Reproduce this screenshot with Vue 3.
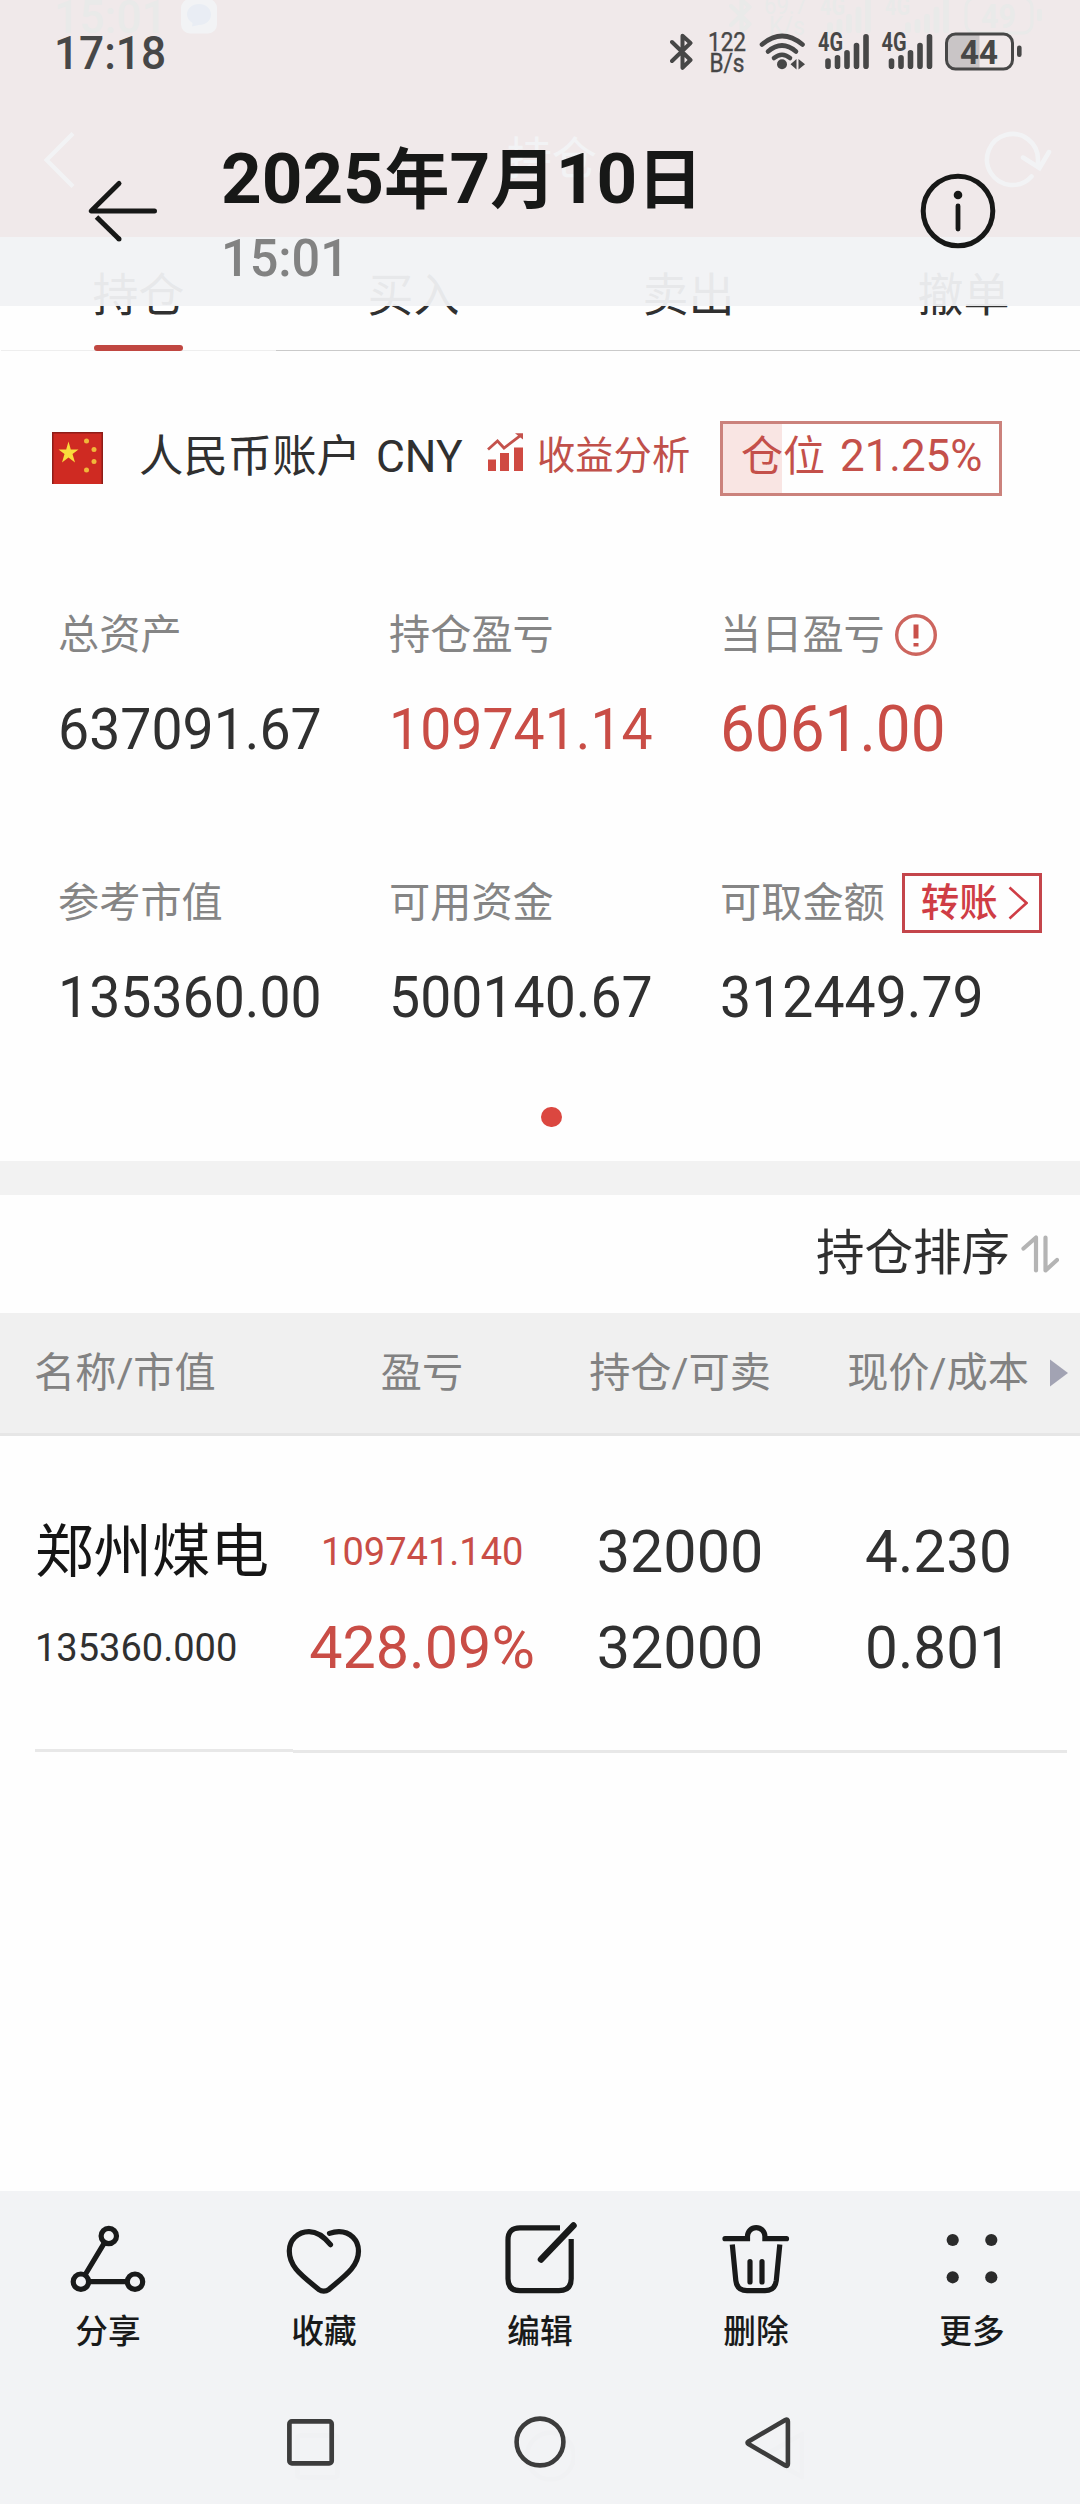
<script setup>
import { ref } from 'vue'

const tabs = ref(['持仓', '买入', '卖出', '撤单'])
const activeTab = ref(0)

const position = ref(21.25)

const assets = ref([
  { label: '总资产', value: '637091.67' },
  { label: '持仓盈亏', value: '109741.14', red: true },
  { label: '当日盈亏', value: '6061.00', red: true, big: true, alert: true },
  { label: '参考市值', value: '135360.00' },
  { label: '可用资金', value: '500140.67' },
  { label: '可取金额', value: '312449.79', transfer: true },
])

const columns = ['名称/市值', '盈亏', '持仓/可卖', '现价/成本']

const holdings = ref([
  {
    name: '郑州煤电',
    marketValue: '135360.000',
    profit: '109741.140',
    profitRate: '428.09%',
    amount: '32000',
    available: '32000',
    price: '4.230',
    cost: '0.801',
  },
])

const actions = [
  { key: 'share', text: '分享' },
  { key: 'favorite', text: '收藏' },
  { key: 'edit', text: '编辑' },
  { key: 'delete', text: '删除' },
  { key: 'more', text: '更多' },
]
</script>

<template>
  <div class="screen">
    <!-- shared status bar glyphs -->
    <svg class="sprite" width="0" height="0">
      <symbol id="bt" viewBox="0 0 24 40" overflow="visible">
        <path d="M2 10 L20.500 28 L12.500 35.800 V3.800 L20.500 11 L2 29" fill="none" stroke="currentColor" stroke-width="4" stroke-linejoin="round" stroke-linecap="round" />
      </symbol>
      <symbol id="bars" viewBox="0 0 52 40" overflow="visible">
        <path d="M10 29.100 V34.300 M19.500 25.800 V34.300 M29 20.800 V34.300 M38.500 13.500 V34.300 M48 4.800 V34.300" fill="none" stroke="currentColor" stroke-width="5.600" stroke-linecap="round" />
      </symbol>
    </svg>

    <header class="app-bar">
      <div class="old-status">
        <span class="old-time">15:01</span>
        <svg class="bubble" width="36" height="36" viewBox="0 0 36 36">
          <rect width="36" height="34.500" rx="9" fill="#fff" />
          <path d="M18 5 C25 5 30 9.500 30 15.500 C30 21.500 25 26 18 26 L11 27.500 L11.500 24 C8 22 6 19 6 15.500 C6 9.500 11 5 18 5Z" fill="#4d8fe0" />
        </svg>
        <svg class="old-icons" width="320" height="40" viewBox="0 0 320 40">
          <use href="#bt" x="0" y="-4" width="24" height="40" />
          <text x="35" y="14" font-size="25" textLength="43" lengthAdjust="spacingAndGlyphs" fill="currentColor">69.7</text>
          <text x="40" y="35" font-size="25" textLength="36" lengthAdjust="spacingAndGlyphs" fill="currentColor">K/s</text>
          <text x="91" y="15" font-size="25" font-weight="700" textLength="25" lengthAdjust="spacingAndGlyphs" fill="currentColor">4G</text>
          <use href="#bars" x="91" y="-4" width="52" height="40" />
          <text x="156" y="15" font-size="25" font-weight="700" textLength="25" lengthAdjust="spacingAndGlyphs" fill="currentColor">4G</text>
          <use href="#bars" x="169" y="-4" width="52" height="40" />
          <rect x="237" y="-2" width="66" height="35" rx="9" fill="none" stroke="currentColor" stroke-width="3" />
          <text x="252" y="28" font-size="33" font-weight="700" textLength="35" lengthAdjust="spacingAndGlyphs" fill="currentColor">49</text>
          <rect x="308" y="9" width="5" height="12" rx="2" fill="currentColor" />
        </svg>
      </div>
      <div class="app-title">
        <svg width="40" height="60" viewBox="0 0 40 60">
          <path d="M33 3.500 L6.500 30 L33 56.500" fill="none" stroke="#fff" stroke-width="4" />
        </svg>
        <span>持仓</span>
        <svg width="70" height="64" viewBox="0 0 70 64">
          <path d="M49.500 48.500 A25.500 25.500 0 1 1 56 32 V38 M41 29.500 L57.500 40 L67 24" fill="none" stroke="#fff" stroke-width="4.500" stroke-linecap="round" />
        </svg>
      </div>
    </header>

    <nav class="tabs">
      <div v-for="(tab, i) in tabs" :key="tab" class="tab" :class="{ active: i === activeTab }" @click="activeTab = i">
        {{ tab }}
      </div>
    </nav>

    <section class="account">
      <svg class="flag" width="51" height="52" viewBox="0 0 51 52">
        <rect width="51" height="52" fill="#cf2a22" />
        <path d="M.75 52 V.75 H50.250 V52" fill="none" stroke="#8e1d18" stroke-width="1.500" />
        <path d="M16.500 9.500 L18.800 17.500 H26.500 L20.500 22 L23 30.500 L16.500 25.500 L10 30.500 L12.500 22 L6.500 17.500 H14.200Z" fill="#f9dc3c" />
        <g fill="#f0b73a">
          <circle cx="34.500" cy="9" r="2.500" />
          <circle cx="42" cy="17.500" r="2.500" />
          <circle cx="42" cy="29.500" r="2.500" />
          <circle cx="34.500" cy="38" r="2.500" />
        </g>
      </svg>
      <span class="account-name">人民币账户 CNY</span>
      <svg class="chart" width="37" height="38" viewBox="0 0 37 38">
        <path d="M1 16.500 L10.500 8 L17 15 L33 2.800" fill="none" stroke="#c4524c" stroke-width="2.800" />
        <path d="M28 .3 H36 V6.500Z" fill="#c4524c" />
        <path d="M1 26.500 H9 V38 H1Z M13 20 H22 V38 H13Z M27 14.500 H36 V38 H27Z" fill="#cf4a42" />
      </svg>
      <span class="analysis">收益分析</span>
      <div class="position">
        <i class="position-fill" :style="{ width: position + '%' }"></i>
        <span class="position-label">仓位</span>
        <span class="position-value">{{ position }}%</span>
      </div>
    </section>

    <section class="assets">
      <div class="asset-grid">
        <div v-for="item in assets" :key="item.label" class="asset">
          <div class="asset-label">
            <span>{{ item.label }}</span>
            <svg v-if="item.alert" class="alert" width="44" height="44" viewBox="0 0 44 44">
              <circle cx="22" cy="22" r="19.300" fill="none" stroke="#cd655e" stroke-width="3.400" />
              <path d="M22 11.500 V25.500 M22 30 V33.500" fill="none" stroke="#c9504a" stroke-width="5" />
            </svg>
            <button v-if="item.transfer" class="transfer">
              转账
              <svg width="20" height="34" viewBox="0 0 20 34">
                <path d="M1.500 1.500 L18.500 17 L1.500 32.500" fill="none" stroke="#cf3d45" stroke-width="2.600" />
              </svg>
            </button>
          </div>
          <div class="asset-value" :class="{ red: item.red, big: item.big }">{{ item.value }}</div>
        </div>
      </div>
      <div class="dot"></div>
    </section>

    <section class="sort">
      <span>持仓排序</span>
      <svg width="38" height="40" viewBox="0 0 38 40">
        <path d="M2.500 14.500 L15 3.500 V36.500 M24.500 3.500 V36.500 L36 26" fill="none" stroke="#b4b4b4" stroke-width="4.200" stroke-linecap="round" stroke-linejoin="round" />
      </svg>
    </section>

    <div class="table-head">
      <span v-for="column in columns" :key="column">{{ column }}</span>
      <svg width="18" height="28" viewBox="0 0 18 28">
        <path d="M0 0.500 L18 14 L0 27.500Z" fill="#a2a3b3" />
      </svg>
    </div>
    <div v-for="row in holdings" :key="row.name" class="table-row">
      <div class="cell first">
        <span class="stock">{{ row.name }}</span>
        <span class="small">{{ row.marketValue }}</span>
      </div>
      <div class="cell red">
        <span class="small">{{ row.profit }}</span>
        <span>{{ row.profitRate }}</span>
      </div>
      <div class="cell">
        <span>{{ row.amount }}</span>
        <span>{{ row.available }}</span>
      </div>
      <div class="cell price">
        <span>{{ row.price }}</span>
        <span>{{ row.cost }}</span>
      </div>
    </div>

    <footer class="toolbar">
      <div class="actions">
        <div v-for="action in actions" :key="action.key" class="action">
          <svg width="80" height="80" viewBox="0 0 80 80" fill="none" stroke="#191a1a" stroke-width="5.200">
            <template v-if="action.key === 'share'">
              <circle cx="40.800" cy="16" r="7.700" />
              <circle cx="12.900" cy="61.700" r="7.700" />
              <circle cx="67" cy="61.700" r="7.700" />
              <path d="M36.500 22.700 L17 55 M20.500 61.700 H59" />
            </template>
            <path v-else-if="action.key === 'favorite'" stroke-linecap="round" d="M46.500 24.700 C40 16.500 34 11.600 25 11.600 C14 11.600 5.300 20 5.300 31 C5.300 47 18 55.500 34.500 69.300 Q39.800 73 45 69.300 C60 56.500 74.500 47 74.500 31 C74.500 20 66 11.600 55 11.600 C51 11.600 48.500 12.300 45.500 13.400" />
            <template v-else-if="action.key === 'edit'">
              <path d="M60 7.900 H20 Q8 7.900 8 19.900 V58.700 Q8 70.700 20 70.700 H59 Q71.200 70.700 71.200 58.700 V19" />
              <path d="M41 39.500 L73.500 5.500" stroke-width="6.500" stroke-linecap="round" />
            </template>
            <template v-else-if="action.key === 'delete'">
              <path stroke-linecap="round" d="M9 18.700 H31.500 V16.300 A8.700 8.700 0 0 1 48.900 16.300 V18.700 H70.500" />
              <path d="M16.300 24.500 L19.800 60.500 Q21 70.700 31 70.700 H49 Q59 70.700 60.300 60.500 L63.800 24.500" />
              <path stroke-linecap="round" d="M34 41.500 V62 M46 41.500 V62" />
            </template>
            <g v-else fill="#2b2b2b" stroke="none">
              <circle cx="20.700" cy="20" r="6.100" />
              <circle cx="59.300" cy="20" r="6.100" />
              <circle cx="20.700" cy="57.300" r="6.100" />
              <circle cx="59.300" cy="57.300" r="6.100" />
            </g>
          </svg>
          <span>{{ action.text }}</span>
        </div>
      </div>
      <div class="sysnav">
        <svg width="70" height="80" viewBox="0 0 70 80" fill="none" stroke-width="4.700">
          <rect x="21.400" y="33.400" width="40" height="42" rx="3" stroke="#f0f1f3" />
          <rect x="13.400" y="19.400" width="42.300" height="42" rx="2.500" stroke="#3c3c3c" />
        </svg>
        <svg width="70" height="80" viewBox="0 0 70 80" fill="none" stroke-width="4.600">
          <circle cx="45.500" cy="54" r="23.400" stroke="#f0f1f3" />
          <circle cx="35" cy="40" r="23.400" stroke="#3c3c3c" />
        </svg>
        <svg width="70" height="80" viewBox="0 0 70 80" fill="none" stroke-width="4.600" stroke-linejoin="round">
          <path d="M30 53.500 L68 32 V75Z" stroke="#f0f1f3" />
          <path d="M14.500 39.400 Q12.500 40.700 14.500 42 L51.300 63.500 Q53.900 64.700 53.900 62 V19.500 Q53.900 16.700 51.300 18Z" stroke="#3c3c3c" />
        </svg>
      </div>
    </footer>

    <div class="overlay">
      <div class="status">
        <span class="time">17:18</span>
        <svg width="360" height="44" viewBox="0 0 360 44">
          <use href="#bt" x="0" y="0" width="24" height="40" />
          <text x="38" y="18.500" font-size="25" textLength="38" lengthAdjust="spacingAndGlyphs" fill="currentColor" stroke="currentColor" stroke-width=".4">122</text>
          <text x="39.500" y="40" font-size="25" textLength="35" lengthAdjust="spacingAndGlyphs" fill="currentColor" stroke="currentColor" stroke-width=".4">B/s</text>
          <g fill="none" stroke="currentColor" stroke-width="4.600" stroke-linecap="round">
            <path d="M92 12.500 Q112 -4.500 132.500 12.500" />
            <path d="M98 19.500 Q112 7.500 126 19.500" />
            <path d="M104 26 Q112 19.500 120 26" />
          </g>
          <circle cx="112" cy="32.300" r="5" fill="currentColor" />
          <path d="M126.500 27 V37.500 L120.500 32.300Z M128.500 27 V37.500 L135 32.300Z" fill="currentColor" />
          <text x="148" y="19" font-size="25" font-weight="700" textLength="25" lengthAdjust="spacingAndGlyphs" fill="currentColor">4G</text>
          <use href="#bars" x="148" y="0" width="52" height="40" />
          <text x="211.500" y="19" font-size="25" font-weight="700" textLength="25" lengthAdjust="spacingAndGlyphs" fill="currentColor">4G</text>
          <use href="#bars" x="211.500" y="0" width="52" height="40" />
          <path d="M309.500 3 H285 Q278 3 278 10 V30 Q278 37 285 37 H309.500Z" fill="#c9c5c6" />
          <rect x="276.500" y="2" width="66" height="35" rx="9" fill="none" stroke="currentColor" stroke-width="3" />
          <text x="290" y="32" font-size="33" font-weight="700" textLength="38" lengthAdjust="spacingAndGlyphs" fill="#474747">44</text>
          <rect x="347" y="13.500" width="4.600" height="11.500" rx="2.200" fill="currentColor" />
        </svg>
      </div>
      <div class="heading">
        <svg class="back" width="84" height="80" viewBox="0 0 84 80">
          <path d="M44 12.500 L16.200 40 H79.500" fill="none" stroke="#171817" stroke-width="5" stroke-linecap="round" stroke-linejoin="round" />
          <path d="M21.500 46 L44 68" fill="none" stroke="#171817" stroke-width="5" />
          <circle cx="44" cy="68" r="2.500" fill="#171817" />
        </svg>
        <div class="date">
          <div class="day"><em>2025</em>年<em>7</em>月<em>10</em>日</div>
          <div class="clock">15:01</div>
        </div>
        <svg class="info" width="80" height="80" viewBox="0 0 80 80">
          <circle cx="40" cy="40" r="34.800" fill="none" stroke="#171817" stroke-width="5" />
          <circle cx="40" cy="24" r="4.300" fill="#171817" />
          <path d="M40 35 V58" stroke="#171817" stroke-width="4.800" stroke-linecap="round" />
        </svg>
      </div>
    </div>
  </div>
</template>

<style>
body {
  margin: 0;
  background: #fefefe;
}
</style>

<style scoped>
.screen {
  position: relative;
  display: flex;
  flex-direction: column;
  width: 1080px;
  height: 2504px;
  overflow: hidden;
  background: #fefefe;
  color: #303030;
  font-family: Roboto, "Noto Sans CJK SC", sans-serif;
}

.sprite {
  position: absolute;
}

.red {
  color: #c94d46;
}

/* page below the overlay */
.app-bar {
  height: 237px;
  flex: none;
  background: #ca3f28;
}

.old-status {
  display: flex;
  height: 40px;
  color: #4a4a1e;
}

.old-time {
  width: 130px;
  margin-left: 54px;
  font-size: 47px;
  font-weight: 500;
  line-height: 33px;
  transform: scaleX(0.945);
  transform-origin: left;
}

.bubble {
  margin: -1px 0 0 -3px;
}

.old-icons {
  margin-left: 512px;
}

.app-title {
  display: flex;
  justify-content: space-between;
  align-items: center;
  height: 60px;
  margin: 90px 28px 0 40px;
  color: #fff;
  font-size: 45px;
}

.app-title span {
  margin-left: 42px;
  line-height: 60px;
}

.tabs {
  display: flex;
  flex: none;
  height: 114px;
  padding-left: 1px;
  overflow: hidden;
}

.tab {
  position: relative;
  flex: none;
  width: 275px;
  height: 113px;
  border-bottom: 1px solid #cacaca;
  font-size: 46px;
  line-height: 117px;
  text-align: center;
}

.tab.active {
  border-color: #eee;
}

.tab.active::after {
  content: "";
  position: absolute;
  left: 93px;
  bottom: -1px;
  width: 89px;
  height: 6px;
  border-radius: 3px;
  background: #c04741;
}

.account {
  display: flex;
  flex: none;
  align-items: center;
  height: 214px;
  padding-left: 52px;
  white-space: nowrap;
}

.account-name {
  width: 324px;
  margin-left: 36px;
  padding-bottom: 2px;
  font-size: 44.400px;
  line-height: 60px;
  word-spacing: 4px;
}

.chart {
  margin: 0 13px 12px 24px;
}

.analysis {
  width: 183px;
  padding-bottom: 4px;
  color: #c0504a;
  font-size: 38.300px;
  line-height: 60px;
}

.position {
  position: relative;
  display: flex;
  align-items: center;
  box-sizing: border-box;
  width: 282px;
  height: 75px;
  border: 3px solid #cb827c;
  color: #c4504a;
  font-size: 42px;
}

.position-fill {
  position: absolute;
  top: 0;
  left: 0;
  bottom: 0;
  background: #f9e5e3;
}

.position-label,
.position-value {
  position: relative;
  line-height: 60px;
}

.position-label {
  margin-left: 18px;
  padding-bottom: 2px;
}

.position-value {
  margin-left: 15px;
  padding-bottom: 4px;
  font-size: 45px;
  transform: scaleX(0.975);
  transform-origin: left;
}

.assets {
  flex: none;
  box-sizing: border-box;
  height: 596px;
  padding-top: 40px;
}

.asset-grid {
  display: grid;
  grid-template-columns: 331px 331px 1fr;
  row-gap: 104px;
  padding-left: 58px;
}

.asset-label {
  display: flex;
  align-items: center;
  height: 60px;
  color: #858585;
  font-size: 41.200px;
  line-height: 60px;
}

.alert {
  margin-left: 9px;
}

.transfer {
  display: flex;
  align-items: center;
  gap: 10px;
  box-sizing: border-box;
  width: 140px;
  height: 60px;
  margin-left: 17px;
  padding: 0 0 0 16px;
  border: 3px solid #c4454b;
  background: none;
  color: #cf3d45;
  font: 500 38.500px/56px Roboto, "Noto Sans CJK SC", sans-serif;
  white-space: nowrap;
}

.asset-value {
  margin-top: 24px;
  font-size: 58px;
  line-height: 80px;
  transform: scaleX(0.955);
  transform-origin: left;
}

.asset-value.big {
  font-size: 64.500px;
  transform: scaleX(0.962);
}

.dot {
  width: 20.500px;
  height: 20.500px;
  margin: 69.500px 0 0 541px;
  border-radius: 50%;
  background: #db4740;
}

.sort {
  display: flex;
  flex: none;
  justify-content: flex-end;
  align-items: center;
  box-sizing: border-box;
  height: 152px;
  padding-right: 21px;
  border-top: 34px solid #f2f2f2;
  font-size: 48.500px;
  line-height: 60px;
}

.sort span {
  margin-right: 11px;
}

.table-head,
.table-row {
  display: grid;
  grid-template-columns: 293px 258px 258px 258px;
}

.table-head {
  flex: none;
  position: relative;
  box-sizing: border-box;
  height: 123px;
  border-bottom: 3px solid #e6e6e6;
  background: #f0f0f0;
  color: #828282;
  font-size: 41.200px;
  line-height: 120px;
  text-align: center;
}

.table-head span:first-child {
  padding-left: 34px;
  text-align: left;
}

.table-head svg {
  position: absolute;
  right: 12px;
  top: 46px;
}

.cell {
  display: flex;
  flex-direction: column;
  align-items: center;
  box-sizing: border-box;
  height: 317px;
  padding-top: 68px;
  border-bottom: 3px solid #e8e8e8;
  font-size: 59.300px;
  line-height: 96px;
}

.cell.first {
  align-items: flex-start;
  height: 316px;
  margin-left: 35px;
}

.price span {
  transform: scaleX(0.985);
}

.stock {
  color: #151515;
  font-size: 58.500px;
}

.small {
  font-size: 38.800px;
  transform: scaleX(0.98);
}

.first .small {
  transform-origin: left;
}

/* bottom area */
.toolbar {
  margin-top: auto;
  height: 313px;
  background: #f2f3f5;
}

.actions {
  display: grid;
  grid-template-columns: repeat(5, 1fr);
  padding-top: 29px;
}

.action {
  display: flex;
  flex-direction: column;
  align-items: center;
  color: #191a1a;
  font-size: 32.700px;
  font-weight: 500;
  line-height: 40px;
}

.action span {
  margin-top: 12px;
}

.sysnav {
  display: flex;
  justify-content: center;
  gap: 159px;
  margin-top: 50px;
}

.overlay {
  position: absolute;
  top: 0;
  left: 0;
  width: 1080px;
  height: 306px;
  background: rgba(241, 242, 244, 0.95);
}

.status {
  display: flex;
  justify-content: space-between;
  height: 44px;
  padding: 32px 50px 0 54px;
  color: #474747;
}

.time {
  font-size: 47px;
  font-weight: 500;
  line-height: 42px;
  transform: scaleX(0.94);
  transform-origin: left;
}

.heading {
  display: flex;
  align-items: flex-start;
  padding: 57px 0 0 75px;
}

.back {
  margin-top: 38px;
}

.date {
  width: 697px;
  margin-left: 62px;
}

.day {
  color: #171817;
  font-size: 65.500px;
  font-weight: 700;
  line-height: 91px;
}

.day em {
  font-size: 71px;
  font-style: normal;
}

.clock {
  margin-top: 2px;
  color: #828282;
  font-size: 52.500px;
  font-weight: 500;
  line-height: 60px;
  transform: scaleX(0.96);
  transform-origin: left;
}

.info {
  margin-top: 38px;
}
</style>
